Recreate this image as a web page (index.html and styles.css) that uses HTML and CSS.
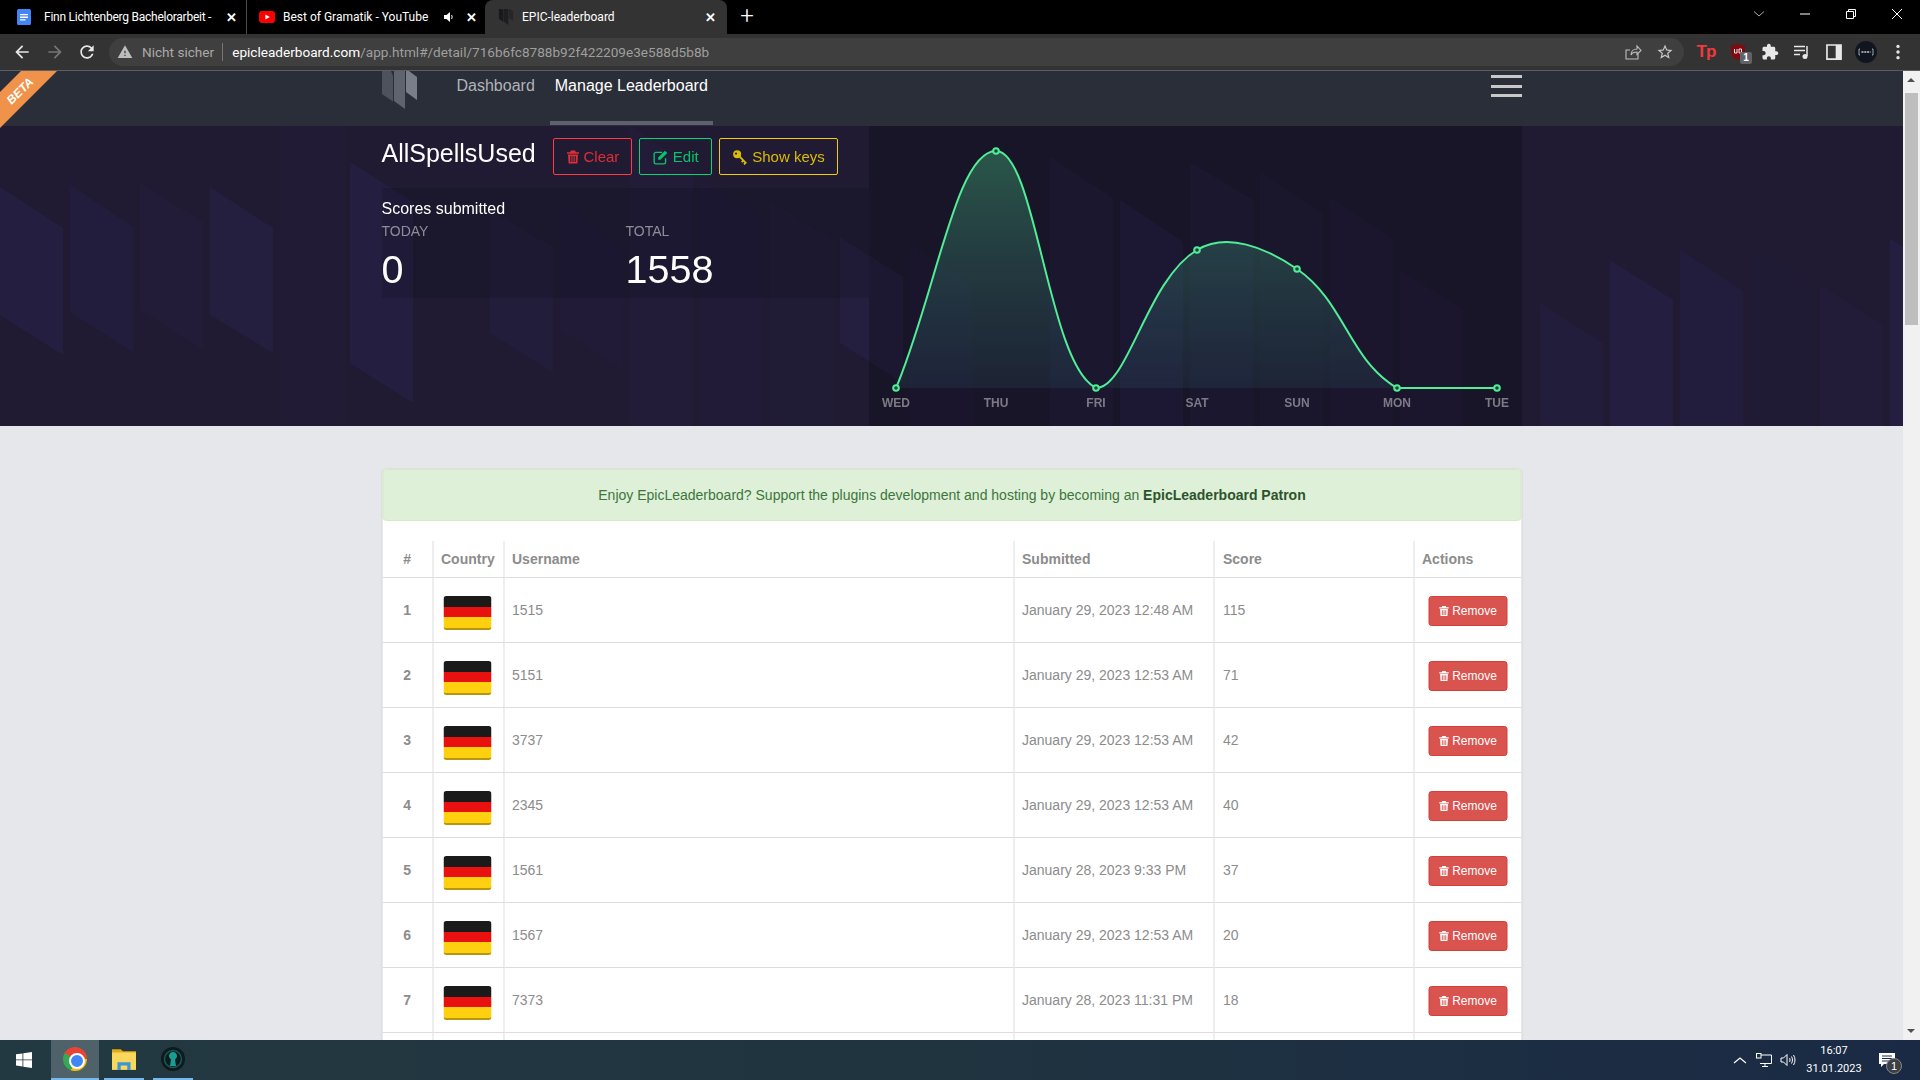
FILE: index.html
```html
<!DOCTYPE html>
<html lang="en">
<head>
  <meta charset="UTF-8" />
  <title>EPIC-leaderboard</title>
  <link rel="stylesheet" href="styles.css">
</head>
<body>

  <svg class="defs" aria-hidden="true">
    <symbol id="trash" viewBox="0 0 14 14">
      <path fill-rule="evenodd" d="M5 .5h4l1 1.8h3v1.4H1V2.300h3zM2 4.500h10l-.6 9H2.600zM4.300 6v6h1.100V6zm2.200 0v6h1.100V6zm2.200 0v6h1.100V6z"/>
    </symbol>
    <symbol id="logo" viewBox="0 0 35 38">
      <path fill="#4d525d" d="M0 0h9l2 5v25.500L0 23z"/>
      <path fill="#5f636e" d="M12 0h11v38l-11-8z"/>
      <path fill="#7a7e88" d="M24 0h3l8 6v23l-11-8z"/>
    </symbol>
  </svg>

  <div class="tabstrip">
    <div class="tab tab-first">
      <svg class="favicon" viewBox="0 0 16 16"><rect x="1" width="14" height="16" rx="1.500" fill="#4285f4"/><path d="M4 5h8v1.300H4zM4 7.600h8v1.300H4zM4 10.200h5.500v1.300H4z" fill="#fff"/></svg>
      <span class="tab-title">Finn Lichtenberg Bachelorarbeit -</span>
      <span class="tab-close">✕</span>
    </div>
    <div class="tab tab-second">
      <svg class="favicon" viewBox="0 0 16 16"><rect y="2" width="16" height="12" rx="3" fill="#f00"/><path d="M6.400 5.400 10.800 8l-4.400 2.600z" fill="#fff"/></svg>
      <span class="tab-title">Best of Gramatik - YouTube</span>
      <svg class="tab-sound" viewBox="0 0 12 12"><path d="M1 4h2.500L7 1v10L3.500 8H1z" fill="#fff"/><path d="M8.500 4c.8 1 .8 3 0 4" stroke="#fff" fill="none"/></svg>
      <span class="tab-close">✕</span>
    </div>
    <div class="tab tab-active">
      <svg class="favicon" viewBox="0 0 35 38"><use href="#logo"/></svg>
      <span class="tab-title">EPIC-leaderboard</span>
      <span class="tab-close">✕</span>
    </div>
    <span class="new-tab">+</span>
    <div class="win-controls">
      <span class="win-btn"><svg viewBox="0 0 12 12"><path d="M1 3.500 6 8l5-4.500" fill="none" stroke="#aaa"/></svg></span>
      <span class="win-btn"><svg viewBox="0 0 12 12"><path d="M1 6h10" stroke="#fff"/></svg></span>
      <span class="win-btn"><svg viewBox="0 0 12 12"><path d="M1.500 3.500h7v7h-7zM3.500 3.500v-2h7v7h-2" fill="none" stroke="#fff"/></svg></span>
      <span class="win-btn"><svg viewBox="0 0 12 12"><path d="M1 1l10 10M11 1 1 11" stroke="#fff"/></svg></span>
    </div>
  </div>

  <div class="toolbar">
    <span class="tool"><svg viewBox="0 0 24 24"><path fill="#e8e8e8" d="M20 11H7.830l5.590-5.590L12 4l-8 8 8 8 1.410-1.410L7.830 13H20v-2z"/></svg></span>
    <span class="tool"><svg viewBox="0 0 24 24"><path fill="#757575" d="M12 4l-1.410 1.410L16.170 11H4v2h12.170l-5.580 5.590L12 20l8-8z"/></svg></span>
    <span class="tool tool-reload"><svg viewBox="0 0 24 24"><path fill="#e8e8e8" d="M17.650 6.350C16.200 4.900 14.210 4 12 4c-4.420 0-7.990 3.580-7.990 8s3.570 8 7.990 8c3.730 0 6.840-2.550 7.730-6h-2.080c-.82 2.330-3.040 4-5.650 4-3.310 0-6-2.690-6-6s2.690-6 6-6c1.660 0 3.140.69 4.220 1.780L13 11h7V4l-2.350 2.350z"/></svg></span>
    <div class="omnibox">
      <svg class="omni-warn" viewBox="0 0 24 24"><path fill="#bdbdbd" d="M1 21h22L12 2 1 21zm12-3h-2v-2h2v2zm0-4h-2v-4h2v4z"/></svg>
      <span class="omni-state">Nicht sicher</span>
      <span class="omni-url"><b>epicleaderboard.com</b>/app.html#/detail/716b6fc8788b92f422209e3e588d5b8b</span>
      <span class="omni-actions">
        <svg viewBox="0 0 18 18"><path d="M14 11v5H2V7h4M7 12c0-4 3-6 6-6V3l4 4.500-4 4V9c-3 0-5 1-6 3z" fill="none" stroke="#bdbdbd" stroke-width="1.100"/></svg>
        <svg viewBox="0 0 24 24"><path fill="#c8c8c8" d="M22 9.240l-7.190-.62L12 2 9.190 8.630 2 9.240l5.460 4.730L5.820 21 12 17.270 18.180 21l-1.630-7.030L22 9.240zM12 15.400l-3.760 2.270 1-4.280-3.320-2.880 4.380-.38L12 6.100l1.710 4.040 4.380.38-3.320 2.880 1 4.280L12 15.400z"/></svg>
      </span>
    </div>
    <span class="ext ext-tp">Tp</span>
    <span class="ext">
      <svg viewBox="0 0 18 18"><path d="M2 2.500 9 1l7 1.500V9c0 4-3 7-7 8-4-1-7-4-7-8z" fill="#800a12"/><path d="M5.500 6v4h2.500V6M10 6h2.500v4H10z" fill="none" stroke="#fff" stroke-width=".9"/></svg>
      <span class="ext-badge">1</span>
    </span>
    <span class="ext"><svg viewBox="0 0 24 24"><path fill="#e8e8e8" d="M20.500 11H19V7c0-1.100-.9-2-2-2h-4V3.500C13 2.120 11.880 1 10.500 1S8 2.120 8 3.500V5H4c-1.100 0-1.990.9-1.990 2v3.800H3.500c1.490 0 2.700 1.210 2.700 2.700s-1.210 2.700-2.700 2.700H2V20c0 1.100.9 2 2 2h3.800v-1.500c0-1.490 1.210-2.700 2.700-2.700 1.490 0 2.700 1.210 2.700 2.700V22H17c1.100 0 2-.9 2-2v-4h1.500c1.380 0 2.500-1.120 2.500-2.500S21.880 11 20.500 11z"/></svg></span>
    <span class="ext"><svg viewBox="0 0 18 18"><path d="M1 3.500h11M1 7.500h11M1 11.500h6" stroke="#e8e8e8" stroke-width="1.500"/><path d="M14 3v10" stroke="#e8e8e8" stroke-width="1.500"/><circle cx="12" cy="13.500" r="2.500" fill="#e8e8e8"/></svg></span>
    <span class="ext"><svg viewBox="0 0 16 16"><path fill-rule="evenodd" d="M1 1h14v14H1zM2.500 2.500v11h7v-11z" fill="#e8e8e8"/></svg></span>
    <span class="ext ext-avatar"><svg viewBox="0 0 22 22"><circle cx="11" cy="11" r="11" fill="#10161f"/><path d="M5 8H4v6h1M17 8h1v6h-1" fill="none" stroke="#ddd" stroke-width=".7"/><path d="M6.500 11h9" stroke="#ccc" stroke-width="1.600" stroke-dasharray="2 .8"/></svg></span>
    <span class="ext"><svg viewBox="0 0 16 16"><circle cx="8" cy="3" r="1.500" fill="#e8e8e8"/><circle cx="8" cy="8" r="1.500" fill="#e8e8e8"/><circle cx="8" cy="13" r="1.500" fill="#e8e8e8"/></svg></span>
  </div>

  <div class="viewport">
    <div class="page">
      <div class="beta"><span>BETA</span></div>

      <nav class="nav">
        <div class="container nav-inner">
          <svg class="nav-logo" viewBox="0 0 35 38"><use href="#logo"/></svg>
          <a class="nav-link">Dashboard</a>
          <a class="nav-link current">Manage Leaderboard</a>
          <div class="burger"><i></i><i></i><i></i></div>
        </div>
      </nav>

      <section class="hero">
        <svg class="hero-bg" viewBox="0 126 1903 300" aria-hidden="true">
          <g fill="#2a2350" opacity=".48">
            <path d="M0 187 63 228V355L0 315z"/>
            <path d="M70 185 133 227V352L70 312z" opacity=".8"/>
            <path d="M140 183 203 222V350L140 310z" opacity=".45"/>
            <path d="M210 187 273 228V353L210 315z" opacity=".9"/>
            <path d="M280 125H345V426H280z" opacity=".25"/>
            <path d="M350 162 413 202V403L350 363z"/>
            <path d="M490 210 553 247V373L490 333z" opacity=".6"/>
            <path d="M560 203 623 247V370L560 330z" opacity=".4"/>
            <path d="M630 125 693 170V426H630z" opacity=".5"/>
            <path d="M700 180 763 217V426H700z" opacity=".4"/>
            <path d="M770 200 833 240V426H770z" opacity=".3"/>
            <path d="M840 237 903 277V383L840 343z" opacity=".9"/>
            <path d="M910 245 973 285V426H910z" opacity=".4"/>
            <path d="M1050 157 1113 198V426H1050z" opacity=".7"/>
            <path d="M1120 200 1183 242V426H1120z"/>
            <path d="M1190 162 1253 200V426H1190z" opacity=".6"/>
            <path d="M1260 172 1323 213V426H1260z" opacity=".3"/>
            <path d="M1330 198 1393 240V426H1330z" opacity=".5"/>
            <path d="M1400 270 1463 310V426H1400z" opacity=".5"/>
            <path d="M1540 303 1603 343V426H1540z" opacity=".6"/>
            <path d="M1610 260 1673 300V426H1610z"/>
            <path d="M1680 250 1743 291V426H1680z" opacity=".8"/>
            <path d="M1750 245 1813 285V426H1750z" opacity=".2"/>
            <path d="M1820 285 1883 325V426H1820z" opacity=".5"/>
            <path d="M1890 238 1903 247V426H1890z"/>
          </g>
        </svg>
        <div class="container hero-inner">
          <div class="hero-left">
            <div class="title-row">
              <h1>AllSpellsUsed</h1>
              <button class="btn-line red"><svg><use href="#trash"/></svg>Clear</button>
              <button class="btn-line green">
                <svg viewBox="0 0 14 14"><path d="M11 8v3.500a1.500 1.500 0 0 1-1.500 1.500h-7A1.500 1.500 0 0 1 1 11.500v-7A1.500 1.500 0 0 1 2.500 3H8" fill="none" stroke="currentColor" stroke-width="1.200"/><path d="M4.500 7.500 10.500 1.500l2 2-6 6h-2z" fill="currentColor"/></svg>Edit
              </button>
              <button class="btn-line yellow">
                <svg viewBox="0 0 14 14"><path fill-rule="evenodd" d="M4.500 1a3.500 3.500 0 1 1 0 7 3.500 3.500 0 0 1 0-7zM3.500 3a1 1 0 1 0 0 2 1 1 0 0 0 0-2z" fill="currentColor"/><path d="M6.500 6.500 12.500 12.500M10 10l-1.500 1.500M12 12l-1.500 1.500" stroke="currentColor" stroke-width="1.600"/></svg>Show keys
              </button>
            </div>
            <div class="stats">
              <div class="stats-head">Scores submitted</div>
              <div class="stats-grid">
                <div>
                  <div class="stat-label">TODAY</div>
                  <div class="stat-value">0</div>
                </div>
                <div>
                  <div class="stat-label">TOTAL</div>
                  <div class="stat-value">1558</div>
                </div>
              </div>
            </div>
          </div>
          <div class="hero-chart">
            <svg class="chart" viewBox="869 126 653 300">
              <defs>
                <linearGradient id="area" x1="0" y1="151" x2="0" y2="388" gradientUnits="userSpaceOnUse">
                  <stop offset="0" stop-color="#4fe38f" stop-opacity=".32"/>
                  <stop offset="1" stop-color="#3a8f90" stop-opacity=".12"/>
                </linearGradient>
              </defs>
              <path fill="url(#area)" d="M896 388C936 293 956 151 996 151C1036 151 1047.700 364.200 1096 388C1128 388 1146.600 279.800 1197 250C1227 232.200 1265.300 247.200 1297 269C1345.300 302.400 1348.300 359 1397 388L1497 388Z"/>
              <path class="chart-line" d="M896 388C936 293 956 151 996 151C1036 151 1047.700 364.200 1096 388C1128 388 1146.600 279.800 1197 250C1227 232.200 1265.300 247.200 1297 269C1345.300 302.400 1348.300 359 1397 388C1428.300 388 1457 388 1497 388"/>
              <g class="chart-dots">
                <circle cx="896" cy="388" r="2.800"/>
                <circle cx="996" cy="151" r="2.800"/>
                <circle cx="1096" cy="388" r="2.800"/>
                <circle cx="1197" cy="250" r="2.800"/>
                <circle cx="1297" cy="269" r="2.800"/>
                <circle cx="1397" cy="388" r="2.800"/>
                <circle cx="1497" cy="388" r="2.800"/>
              </g>
              <g class="chart-labels">
                <text x="896" y="407">WED</text>
                <text x="996" y="407">THU</text>
                <text x="1096" y="407">FRI</text>
                <text x="1197" y="407">SAT</text>
                <text x="1297" y="407">SUN</text>
                <text x="1397" y="407">MON</text>
                <text x="1497" y="407">TUE</text>
              </g>
            </svg>
          </div>
        </div>
      </section>

      <main class="content">
        <div class="container card">
          <div class="alert">Enjoy EpicLeaderboard? Support the plugins development and hosting by becoming an <strong>EpicLeaderboard Patron</strong></div>
          <table class="scores">
            <colgroup>
              <col class="c-rank"><col class="c-country"><col class="c-user"><col class="c-date"><col class="c-score"><col class="c-action">
            </colgroup>
            <thead>
              <tr><th class="rank">#</th><th>Country</th><th>Username</th><th>Submitted</th><th>Score</th><th>Actions</th></tr>
            </thead>
            <tbody>
              <tr><td class="rank">1</td><td><div class="flag"></div></td><td>1515</td><td>January 29, 2023 12:48 AM</td><td>115</td><td><button class="btn-remove"><svg><use href="#trash"/></svg>Remove</button></td></tr>
              <tr><td class="rank">2</td><td><div class="flag"></div></td><td>5151</td><td>January 29, 2023 12:53 AM</td><td>71</td><td><button class="btn-remove"><svg><use href="#trash"/></svg>Remove</button></td></tr>
              <tr><td class="rank">3</td><td><div class="flag"></div></td><td>3737</td><td>January 29, 2023 12:53 AM</td><td>42</td><td><button class="btn-remove"><svg><use href="#trash"/></svg>Remove</button></td></tr>
              <tr><td class="rank">4</td><td><div class="flag"></div></td><td>2345</td><td>January 29, 2023 12:53 AM</td><td>40</td><td><button class="btn-remove"><svg><use href="#trash"/></svg>Remove</button></td></tr>
              <tr><td class="rank">5</td><td><div class="flag"></div></td><td>1561</td><td>January 28, 2023 9:33 PM</td><td>37</td><td><button class="btn-remove"><svg><use href="#trash"/></svg>Remove</button></td></tr>
              <tr><td class="rank">6</td><td><div class="flag"></div></td><td>1567</td><td>January 29, 2023 12:53 AM</td><td>20</td><td><button class="btn-remove"><svg><use href="#trash"/></svg>Remove</button></td></tr>
              <tr><td class="rank">7</td><td><div class="flag"></div></td><td>7373</td><td>January 28, 2023 11:31 PM</td><td>18</td><td><button class="btn-remove"><svg><use href="#trash"/></svg>Remove</button></td></tr>
              <tr><td></td><td></td><td></td><td></td><td></td><td></td></tr>
            </tbody>
          </table>
        </div>
      </main>
    </div>

    <div class="scrollbar">
      <span class="scroll-up"></span>
      <span class="scroll-thumb"></span>
      <span class="scroll-down"></span>
    </div>
  </div>

  <div class="taskbar">
    <span class="task-start">
      <svg viewBox="0 0 16 16"><path fill="#fff" d="M0 2.300 6.500 1.400V7.500H0zM7.300 1.300 16 0V7.500H7.300zM0 8.300H6.500V14.400L0 13.500zM7.300 8.300H16V16L7.300 14.700z"/></svg>
    </span>
    <span class="task-item active"><span class="chrome-logo"></span></span>
    <span class="task-item">
      <svg viewBox="0 0 22 20"><path fill="#e6a817" d="M0 1h8l2 2h12v2H0z"/><path fill="#fbd75b" d="M0 4h22v16H0z"/><path fill="#3a97d8" d="M5 13h12v7h-3v-4H8v4H5z"/></svg>
    </span>
    <span class="task-item">
      <svg viewBox="0 0 24 24"><circle cx="12" cy="12" r="12" fill="#10191c"/><circle cx="12" cy="12" r="8.500" fill="none" stroke="#0f5d5b" stroke-width="1.500"/><path fill="#1a9c93" d="M12 5c2.500 0 4 2 4 4 0 1.500-1 2.500-2 3.500l1 6.500h-6l1-6.500C9 11.500 8 10.500 8 9c0-2 1.500-4 4-4z"/></svg>
    </span>
    <div class="tray">
      <svg class="tray-icon" viewBox="0 0 16 16"><path d="M2 11l6-5 6 5" fill="none" stroke="#fff" stroke-width="1.200"/></svg>
      <svg class="tray-icon" viewBox="0 0 16 16"><path d="M4 3h11.500v8.500H4M6 14.500h6M9 11.500v3" fill="none" stroke="#fff"/><rect x=".5" y="1.500" width="4.500" height="4.500" fill="#203049" stroke="#fff"/></svg>
      <svg class="tray-icon" viewBox="0 0 16 16"><path d="M1 6h2.500L7 2.500v11L3.500 10H1z" fill="none" stroke="#fff"/><path d="M9.500 6c.7 1 .7 3 0 4M11.500 4.500c1.300 2 1.300 5 0 7M13.500 3c2 3 2 7 0 10" fill="none" stroke="#fff"/></svg>
      <div class="clock">
        <span>16:07</span>
        <span>31.01.2023</span>
      </div>
      <span class="notify">
        <svg viewBox="0 0 16 16"><path fill="#fff" d="M0 1h16v11H5l-3 3v-3H0z"/><path d="M3 4h10M3 6.500h10M3 9h7" stroke="#1b2b45"/></svg>
        <span class="notify-count">1</span>
      </span>
    </div>
  </div>

</body>
</html>
```

FILE: styles.css
```css
* {
  box-sizing: border-box;
}

body {
  margin: 0;
  width: 1920px;
  height: 1080px;
  overflow: hidden;
  display: flex;
  flex-direction: column;
  font-family: "Liberation Sans", Arial, sans-serif;
  font-size: 14px;
  background: #e6e7eb;
}

.defs {
  display: none;
}

/* browser tabs */
.tabstrip {
  height: 34px;
  display: flex;
  background: #000;
  color: #fff;
  font-family: Roboto, sans-serif;
  font-size: 12px;
  padding-left: 8px;
}

.tab {
  display: flex;
  align-items: center;
  height: 34px;
  padding: 0 10px;
  gap: 8px;
}

.tab-first {
  width: 239px;
  padding: 0 9px 0 8px;
  gap: 12px;
  letter-spacing: -0.25px;
  border-right: 1px solid #4a4a4a;
}

.tab-second {
  width: 238px;
  padding: 0 8px 0 12px;
}

.tab-active {
  width: 242px;
  padding: 0 11px 0 13px;
  background: #333;
  border-radius: 8px 8px 0 0;
}

.tab-active .favicon {
  filter: brightness(0.3);
}

.favicon {
  width: 16px;
  height: 16px;
  flex: none;
}

.tab-title {
  flex: 1;
  white-space: nowrap;
  overflow: hidden;
  min-width: 0;
}

.tab-sound {
  width: 12px;
  height: 12px;
  margin-right: 2px;
  flex: none;
}

.tab-close {
  flex: none;
  width: 12px;
  font-size: 13px;
  font-weight: 700;
  text-align: center;
}

.new-tab {
  width: 40px;
  text-align: center;
  font-size: 24px;
  font-weight: 300;
  line-height: 32px;
}

.win-controls {
  margin-left: auto;
  display: flex;
}

.win-btn {
  width: 46px;
  height: 28px;
  display: flex;
  align-items: center;
  justify-content: center;
}

.win-btn svg {
  width: 12px;
  height: 12px;
}

/* address bar */
.toolbar {
  height: 37px;
  display: flex;
  align-items: center;
  padding: 0 6px 1px 5px;
  background: #333;
  border-bottom: 1px solid #5e5e5e;
}

.tool {
  width: 33px;
  display: flex;
  justify-content: center;
}

.tool svg {
  width: 20px;
  height: 20px;
}

.tool-reload {
  padding-right: 2px;
}

.omnibox {
  width: 1575px;
  height: 28px;
  margin: 0 6px 0 5px;
  padding: 0 8px;
  display: flex;
  align-items: center;
  border-radius: 14px;
  background: #3f3f3f;
  font-family: Roboto, sans-serif;
  font-size: 13.6px;
  color: #9e9e9e;
}

.omni-warn {
  width: 16px;
  height: 16px;
  margin-right: 9px;
}

.omni-state {
  padding-right: 8px;
  margin-right: 9px;
  border-right: 1px solid #777;
  line-height: 18px;
  color: #aaa;
}

.omni-url b {
  font-weight: 400;
  color: #fff;
}

.omni-actions {
  margin-left: auto;
  display: flex;
  gap: 14px;
  padding-right: 2px;
}

.omni-actions svg {
  width: 18px;
  height: 18px;
}

.ext {
  position: relative;
  width: 32px;
  height: 24px;
  display: flex;
  align-items: center;
  justify-content: center;
}

.ext svg {
  width: 18px;
  height: 18px;
}

.ext-avatar svg {
  width: 22px;
  height: 22px;
}

.ext-tp {
  font-family: "Liberation Sans", sans-serif;
  font-weight: 700;
  font-size: 17px;
  letter-spacing: -1px;
  color: #f03a3e;
}

.ext-badge {
  position: absolute;
  right: 2px;
  bottom: 0;
  width: 12px;
  height: 12px;
  border-radius: 2px;
  background: #5f6368;
  color: #fff;
  font-size: 10px;
  font-weight: 700;
  line-height: 12px;
  text-align: center;
}

/* page area */
.viewport {
  flex: 1;
  min-height: 0;
  display: flex;
}

.page {
  flex: 1;
  min-width: 0;
  position: relative;
  overflow: hidden;
}

.container {
  width: 1140px;
  margin: 0 auto;
}

.beta {
  position: absolute;
  left: 0;
  top: 0;
  z-index: 2;
  width: 57px;
  height: 57px;
  background: #f0924a;
  clip-path: polygon(21px 0, 57px 0, 0 57px, 0 21px);
}

.beta span {
  position: absolute;
  left: -2px;
  top: 13px;
  width: 44px;
  text-align: center;
  transform: rotate(-45deg);
  color: #fff;
  font-size: 12px;
  font-weight: 700;
  font-style: italic;
}

.nav {
  height: 55px;
  background: #2a2e38;
}

.nav-inner {
  height: 54px;
  display: flex;
}

.nav-logo {
  width: 35px;
  height: 38px;
  margin-right: 35px;
  flex: none;
}

.nav-link {
  height: 54px;
  padding: 5px 5px 0;
  margin-right: 10px;
  border-bottom: 4px solid transparent;
  font-size: 16px;
  line-height: 20px;
  color: #b0b3b8;
}

.nav-link.current {
  color: #fff;
  border-bottom-color: #5d606e;
}

.burger {
  margin-left: auto;
  padding-top: 4px;
  display: flex;
  flex-direction: column;
  gap: 6.5px;
}

.burger i {
  display: block;
  width: 31px;
  height: 3px;
  background: #c8c8c8;
}

/* dark header */
.hero {
  position: relative;
  height: 300px;
  background: #201b33;
}

.hero-bg {
  position: absolute;
  left: 0;
  top: 0;
  width: 100%;
  height: 100%;
}

.hero-inner {
  position: relative;
  height: 300px;
  display: flex;
}

.hero-left {
  width: 487px;
  flex: none;
  color: #fff;
}

.title-row {
  height: 62px;
  padding-top: 12px;
  display: flex;
  align-items: flex-start;
  gap: 7px;
}

.title-row h1 {
  margin: 0 11px 0 0;
  width: 153px;
  font-size: 25px;
  font-weight: 400;
  line-height: 30px;
  white-space: nowrap;
}

.btn-line {
  height: 37px;
  padding: 0 12px;
  display: flex;
  align-items: center;
  gap: 4px;
  background: transparent;
  border: 1px solid;
  border-radius: 2px;
  font: 15px "Liberation Sans", Arial, sans-serif;
}

.btn-line svg {
  width: 14px;
  height: 14px;
  fill: currentColor;
}

.btn-line.green svg,
.btn-line.yellow svg {
  width: 16px;
  height: 16px;
}

.btn-line.red {
  color: #dc2f36;
  border-color: #ff3b3f;
}

.btn-line.green {
  padding: 0 12.5px;
  color: #05c46b;
  border-color: #05d870;
}

.btn-line.yellow {
  color: #dcbc00;
  border-color: #f2d000;
}

.stats {
  height: 110px;
  padding-top: 12px;
  background: rgba(0, 0, 0, 0.13);
}

.stats-head {
  font-size: 16px;
  line-height: 18px;
}

.stats-grid {
  display: grid;
  grid-template-columns: 244px 1fr;
  margin-top: 5px;
}

.stat-label {
  font-size: 14px;
  line-height: 16px;
  color: #8f8c98;
}

.stat-value {
  font-size: 39.5px;
  line-height: 46px;
  margin-top: 7px;
}

.hero-chart {
  flex: 1;
  min-width: 0;
  background: rgba(0, 0, 0, 0.2);
}

.chart {
  display: block;
  width: 653px;
  height: 300px;
}

.chart-line {
  fill: none;
  stroke: #4fee97;
  stroke-width: 2;
}

.chart-dots circle {
  fill: #21433f;
  stroke: #4fee97;
  stroke-width: 2;
}

.chart-labels text {
  fill: #7d7987;
  font-size: 12px;
  font-weight: 700;
  text-anchor: middle;
}

/* score table */
.content {
  padding-top: 43px;
}

.card {
  width: 1139px;
  transform: translateX(0.5px);
  background: #fff;
  border-radius: 4px;
  box-shadow: 0 0 2px rgba(0, 0, 0, 0.12);
}

.alert {
  height: 52px;
  border: 1px solid #d6e9c6;
  border-radius: 4px;
  background: #dff0d8;
  color: #3c763d;
  text-align: center;
  line-height: 50px;
}

.alert strong {
  color: #2b542c;
}

.scores {
  width: 1139px;
  margin-top: 20px;
  table-layout: fixed;
  border-collapse: collapse;
  color: #8c8c8c;
}

.c-rank { width: 50px; }
.c-country { width: 71px; }
.c-user { width: 510px; }
.c-date { width: 200px; }
.c-score { width: 200px; }
.c-action { width: 108px; }

.scores th,
.scores td {
  padding: 0 8px;
  text-align: left;
  vertical-align: middle;
  border-left: 1px solid #ddd;
  border-bottom: 1px solid #ddd;
}

.scores th:first-child,
.scores td:first-child {
  border-left: 0;
}

.scores th:nth-child(5),
.scores td:nth-child(5) {
  padding-left: 9px;
}

.scores th {
  height: 36px;
}

.scores td {
  height: 65px;
}

.scores .rank {
  text-align: center;
  font-weight: 700;
}

.flag {
  width: 48px;
  height: 34px;
  margin: 6px 0 0 2px;
  border-radius: 3px;
  border-bottom: 2px solid #b8960e;
  background: linear-gradient(#1a1a1a 0 33%, #e8110f 33% 66%, #ffd00f 66%);
}

.btn-remove {
  width: 79px;
  height: 30px;
  margin: 2px 0 0 6px;
  padding: 0;
  display: flex;
  align-items: center;
  justify-content: center;
  gap: 3px;
  background: #d9534f;
  border: 1px solid #d43f3a;
  border-radius: 3px;
  color: #fff;
  font: 12px "Liberation Sans", Arial, sans-serif;
}

.btn-remove svg {
  width: 11px;
  height: 12px;
  fill: #fff;
}

/* page scrollbar */
.scrollbar {
  position: relative;
  width: 17px;
  flex: none;
  background: #f1f1f1;
}

.scroll-thumb {
  position: absolute;
  left: 2px;
  top: 22px;
  width: 13px;
  height: 232px;
  background: #bebebe;
}

.scroll-up,
.scroll-down {
  position: absolute;
  left: 4px;
  border-left: 4px solid transparent;
  border-right: 4px solid transparent;
}

.scroll-up {
  top: 7px;
  border-bottom: 4px solid #505050;
}

.scroll-down {
  bottom: 7px;
  border-top: 4px solid #505050;
}

/* windows taskbar */
.taskbar {
  height: 40px;
  display: flex;
  align-items: center;
  background: linear-gradient(90deg, #233941, #20343f 45%, #1a2a45);
  color: #fff;
}

.task-start {
  width: 48px;
  margin-right: 3px;
  display: flex;
  justify-content: center;
}

.task-start svg {
  width: 16px;
  height: 16px;
}

.task-item {
  width: 40px;
  height: 40px;
  margin-right: 9px;
  display: flex;
  align-items: center;
  justify-content: center;
  border-bottom: 2px solid #76b9ed;
}

.task-item svg {
  width: 24px;
  height: 24px;
}

.task-item.active {
  width: 48px;
  margin-right: 5px;
  background: #4f6169;
}

.chrome-logo {
  position: relative;
  width: 24px;
  height: 24px;
  border-radius: 50%;
  background: conic-gradient(from -60deg, #ea4335 0 150deg, #fbbc05 150deg 260deg, #34a853 260deg);
}

.chrome-logo::after {
  content: "";
  position: absolute;
  left: 6px;
  top: 6px;
  width: 12px;
  height: 12px;
  border-radius: 50%;
  background: #4285f4;
  border: 2px solid #fff;
}

.tray {
  margin-left: auto;
  display: flex;
  align-items: center;
  padding-right: 25px;
}

.tray-icon {
  width: 16px;
  height: 16px;
  margin-right: 8px;
}

.clock {
  width: 60px;
  display: flex;
  flex-direction: column;
  align-items: center;
  gap: 4px;
  font-family: Roboto, sans-serif;
  font-size: 11px;
  line-height: 14px;
}

.notify {
  position: relative;
  width: 16px;
  height: 16px;
  margin-left: 15px;
}

.notify svg {
  width: 16px;
  height: 16px;
  display: block;
}

.notify-count {
  position: absolute;
  left: 7px;
  top: 6px;
  width: 16px;
  height: 16px;
  border-radius: 50%;
  background: #3c3f44;
  border: 1px solid #888;
  font-size: 11px;
  line-height: 14px;
  text-align: center;
}
```
